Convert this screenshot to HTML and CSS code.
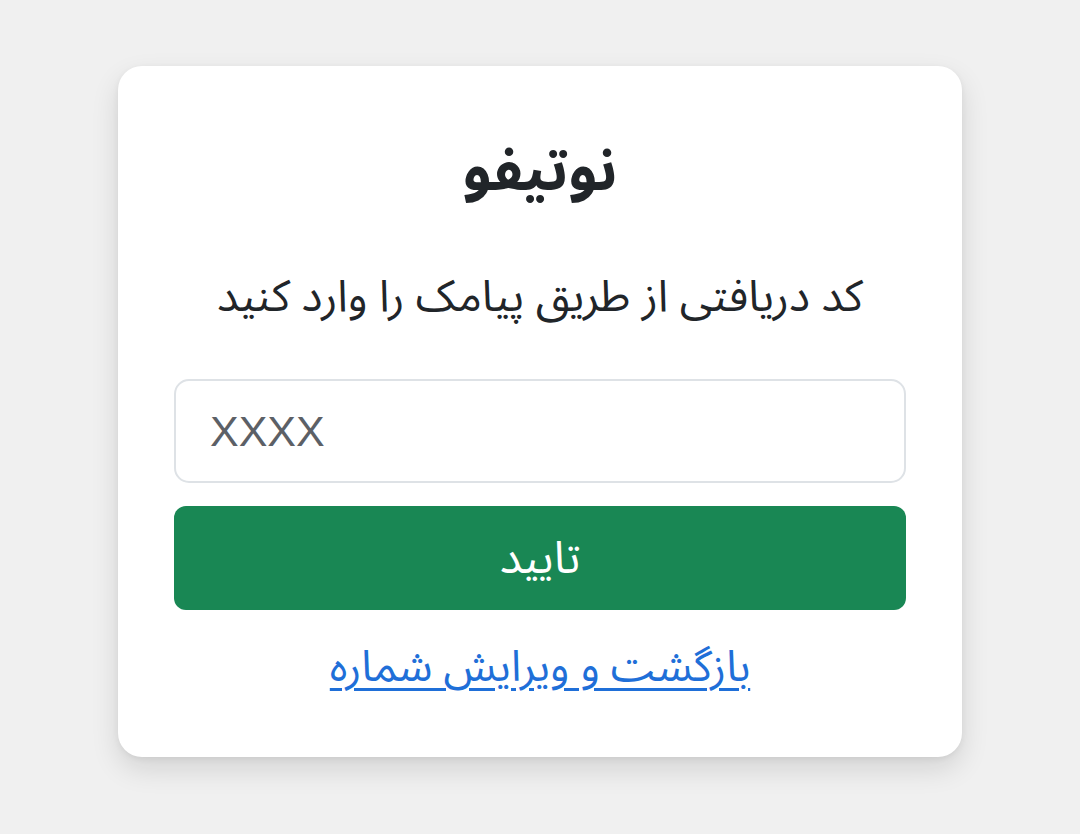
FILE: index.html
```html
<!DOCTYPE html>
<html lang="fa" dir="rtl">
<head>
<meta charset="utf-8">
<title>نوتیفو</title>
<link rel="stylesheet" href="styles.css">
</head>
<body>
<main class="page">
  <section class="card">
    <h1 class="title">نوتیفو</h1>
    <p class="subtitle">کد دریافتی از طریق پیامک را وارد کنید</p>
    <form class="form">
      <input class="code-input" type="text" placeholder="XXXX" dir="ltr">
      <button class="submit" type="button">تایید</button>
    </form>
    <a class="back-link" href="#">بازگشت و ویرایش شماره</a>
  </section>
</main>
</body>
</html>
```

FILE: styles.css
```css
html, body {
  margin: 0;
  padding: 0;
}
body {
  min-height: 100vh;
  background: #f0f0f0;
  font-family: "Noto Sans Arabic", "Noto Sans", "DejaVu Sans", sans-serif;
  color: #212529;
}
.page {
  display: flex;
  justify-content: center;
  padding-top: 66px;
}
.card {
  width: 844px;
  box-sizing: border-box;
  background: #fff;
  border-radius: 24px;
  box-shadow: 0 12px 28px rgba(0, 0, 0, 0.12), 0 2px 6px rgba(0, 0, 0, 0.06);
  padding: 66px 56px 57px;
  display: flex;
  flex-direction: column;
  align-items: center;
}
.title {
  margin: 0;
  font-size: 58px;
  font-weight: 700;
  line-height: 80px;
}
.subtitle {
  margin: 53px 0 0;
  font-size: 44px;
  line-height: 64px;
}
.form {
  width: 100%;
  margin-top: 50px;
  display: flex;
  flex-direction: column;
  gap: 23px;
}
.code-input {
  box-sizing: border-box;
  width: 100%;
  height: 104px;
  border: 2px solid #dee2e6;
  border-radius: 15px;
  padding: 0 34px;
  font-family: "Liberation Sans", "Noto Sans", sans-serif;
  font-size: 43px;
  color: #212529;
  text-align: left;
  outline: none;
  background: #fff;
}
.code-input::placeholder {
  color: #5c6066;
}
.submit {
  width: 100%;
  height: 104px;
  border: none;
  border-radius: 12px;
  background: #198754;
  color: #fff;
  font-family: "Noto Sans Arabic", "Noto Sans", "DejaVu Sans", sans-serif;
  font-size: 45px;
}
.back-link {
  margin-top: 26px;
  font-size: 43px;
  line-height: 64px;
  color: #1f6fd8;
  text-decoration: underline;
  text-underline-offset: 7px;
  text-decoration-thickness: 3px;
}
```
